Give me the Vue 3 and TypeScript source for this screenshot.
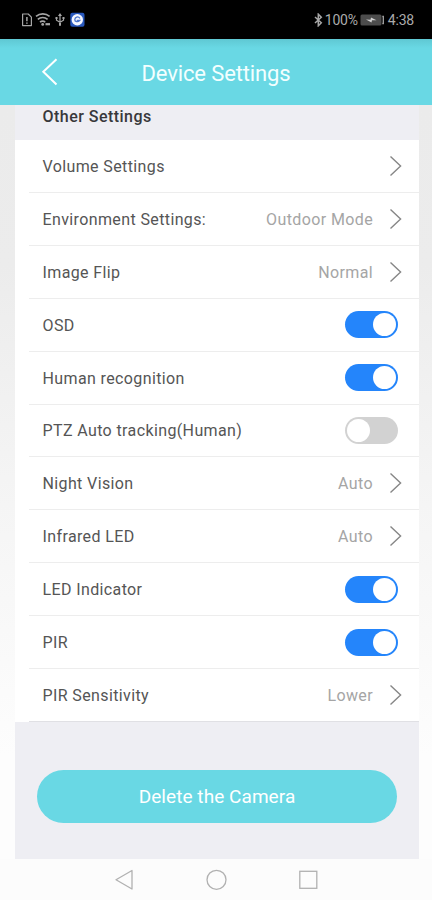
<script setup lang="ts">
interface Row {
  label: string
  value?: string
  toggle?: boolean
}

const rows: Row[] = [
  { label: 'Volume Settings' },
  { label: 'Environment Settings:', value: 'Outdoor Mode' },
  { label: 'Image Flip', value: 'Normal' },
  { label: 'OSD', toggle: true },
  { label: 'Human recognition', toggle: true },
  { label: 'PTZ Auto tracking(Human)', toggle: false },
  { label: 'Night Vision', value: 'Auto' },
  { label: 'Infrared LED', value: 'Auto' },
  { label: 'LED Indicator', toggle: true },
  { label: 'PIR', toggle: true },
  { label: 'PIR Sensitivity', value: 'Lower' },
]
</script>

<template>
  <div class="screen">
    <div class="status">
      <svg class="status-icons" width="70" height="20" viewBox="0 0 70 20" fill="none" stroke="#a6a6a6" stroke-width="1.2">
        <path d="M1.6 4h5.6l3.2 3.2v8.4H1.6z" stroke-linejoin="round" />
        <path d="M5.9 7v4.2M5.9 12.4v1.4" stroke-width="1.5" />
        <path d="M15 6.400c4-3.400 9.600-3.400 13.600 0M16.800 9.400c2.800-2.500 7-2.500 9.800 0M19 12.200c1.600-1.500 3.800-1.500 5.200 0" stroke-width="1.600" />
        <circle cx="21.700" cy="14.400" r="1.400" fill="#a6a6a6" stroke="none" />
        <path d="M24.500 14.200h4.500" stroke-width="2.200" />
        <path d="M39 5v9M35.500 7.800v2.400l3.500 2 3.500-2V7.800" />
        <path d="M39 3l2 3h-4zM38 13h2v2.800h-2zM34.500 7h2v2h-2zM41.500 7h2v2h-2z" fill="#a6a6a6" stroke="none" />
        <rect x="49.300" y="2.800" width="14.200" height="13.900" rx="2" fill="#2858bd" stroke="none" />
        <circle cx="56.300" cy="9.700" r="5.700" fill="#f4f7ff" stroke="none" />
        <path d="M59 8.300c-2-2.500-5-1.200-5.200 1.200s3.300 3 5 .8h-3" stroke="#4b75cc" stroke-width="1.300" />
      </svg>
      <div class="status-right">
        <svg width="9" height="14" viewBox="0 0 9 14" fill="none" stroke="#a6a6a6" stroke-width="1.500">
          <path d="M1 4l6.300 5.800L4.300 12.800V1.200l3 3L1 10" />
        </svg>
        <span class="percent">100%</span>
        <svg class="battery" width="25" height="12" viewBox="0 0 25 12">
          <rect x="0.500" y="0.500" width="21" height="11" rx="1.500" fill="#4c4c4c" />
          <path d="M22.300 2.500h1v7h-1" fill="none" stroke="#a6a6a6" stroke-width="1.300" />
          <path d="M6 5.500l4.500.2L11 3.500l5.500 2.700-4.500.1-.5 2.200z" fill="#d0d0d0" />
        </svg>
        <span class="clock">4:38</span>
      </div>
    </div>

    <header class="header">
      <svg class="back" width="18" height="30" viewBox="0 0 18 30" fill="none" stroke="#fff" stroke-width="2">
        <path d="M15.500 2.200L2.300 14.700l13.200 12.800" />
      </svg>
      <h1>Device Settings</h1>
    </header>

    <main class="body">
      <div class="panel">
        <h2>Other Settings</h2>
        <div class="list">
          <div v-for="row in rows" :key="row.label" class="row">
            <span class="label">{{ row.label }}</span>
            <span v-if="row.toggle !== undefined" class="switch" :class="{ on: row.toggle }"><i class="knob" /></span>
            <template v-else>
              <span class="value">{{ row.value }}</span>
              <svg class="chevron" width="14" height="22" viewBox="0 0 14 22" fill="none" stroke="#868686" stroke-width="1.400">
                <path d="M1.500 1.500L11.600 11 1.500 20.500" />
              </svg>
            </template>
          </div>
        </div>
        <div class="footer">
          <button type="button">Delete the Camera</button>
        </div>
      </div>
    </main>

    <nav class="nav">
      <svg width="210" height="24" viewBox="0 0 210 24" fill="none" stroke="#b1b1b1" stroke-width="1.300">
        <path d="M21 2.500v18.500L5 11.700z" stroke-linejoin="round" />
        <circle cx="105.500" cy="11.800" r="9.500" />
        <rect x="188.800" y="3.300" width="17" height="17" />
      </svg>
    </nav>
  </div>
</template>

<style>
body {
  margin: 0;
}
</style>

<style scoped>
.screen {
  width: 432px;
  height: 900px;
  display: flex;
  flex-direction: column;
  overflow: hidden;
  background: #fcfcfc;
  font-family: Roboto, "Liberation Sans", sans-serif;
}
.status {
  height: 39px;
  flex: none;
  box-sizing: border-box;
  padding: 0 18px 0 21px;
  background: #000;
  color: #ababab;
  display: flex;
  align-items: center;
  justify-content: space-between;
}
.status-right {
  display: flex;
  align-items: center;
  font-size: 14px;
  line-height: 20px;
}
.percent {
  margin-left: 2px;
  letter-spacing: -0.200px;
}
.battery {
  margin: 0 3px 0 2px;
}
.clock {
  letter-spacing: -0.200px;
}
.header {
  height: 66px;
  flex: none;
  background: linear-gradient(#5fc8d3, #69d8e4 9px);
  display: grid;
  grid-template-columns: 41px 18px 1fr 59px;
  align-items: center;
}
.back {
  grid-column: 2;
}
h1 {
  grid-column: 3;
  margin: 3px 0 0;
  font-size: 22px;
  line-height: 26px;
  font-weight: 400;
  letter-spacing: -0.130px;
  text-align: center;
  color: #f3ffff;
}
.body {
  height: 754px;
  flex: none;
  box-sizing: border-box;
  padding: 0 13px 0 15px;
  background: linear-gradient(#ebebeb 0, #ececec 160px, #f5f5f5 400px, #fdfdfd 650px);
}
.panel {
  height: 100%;
  display: flex;
  flex-direction: column;
  background: #eeeef3;
}
h2 {
  height: 35px;
  flex: none;
  box-sizing: border-box;
  margin: 0;
  padding: 1px 0 0 27.500px;
  font-size: 16px;
  line-height: 22px;
  font-weight: 500;
  letter-spacing: 0.470px;
  color: #38383b;
}
.list {
  height: 582px;
  flex: none;
  display: grid;
  grid-template-rows: repeat(11, 1fr);
  padding-left: 14px;
  background: #fff;
}
.row {
  display: flex;
  align-items: center;
  padding: 0 14px 0 13.500px;
  border-bottom: 1px solid #ededed;
}
.row:last-child {
  border-bottom-color: #e0e0e4;
}
.label,
.value {
  font-size: 16px;
  line-height: 20px;
  letter-spacing: 0.380px;
  padding-top: 2px;
}
.label {
  flex: 1;
  color: #555;
}
.value {
  color: #a5a5a5;
}
.chevron {
  margin: 0 2px 0 16px;
}
.switch {
  width: 53px;
  height: 27px;
  margin-right: 7px;
  box-sizing: border-box;
  padding: 2px;
  border-radius: 14px;
  background: #d2d2d2;
  display: flex;
}
.switch.on {
  justify-content: flex-end;
  background: #2485fb;
}
.knob {
  width: 23px;
  height: 23px;
  border-radius: 50%;
  background: #fff;
}
.footer {
  flex: 1;
  padding: 48px 22px 0;
}
button {
  display: block;
  width: 100%;
  height: 53px;
  padding: 0;
  border: 0;
  border-radius: 27px;
  background: #69d8e4;
  color: #fff;
  font-family: inherit;
  font-size: 19px;
  letter-spacing: 0.060px;
}
.nav {
  flex: 1;
  display: flex;
  align-items: center;
  justify-content: center;
}
</style>
